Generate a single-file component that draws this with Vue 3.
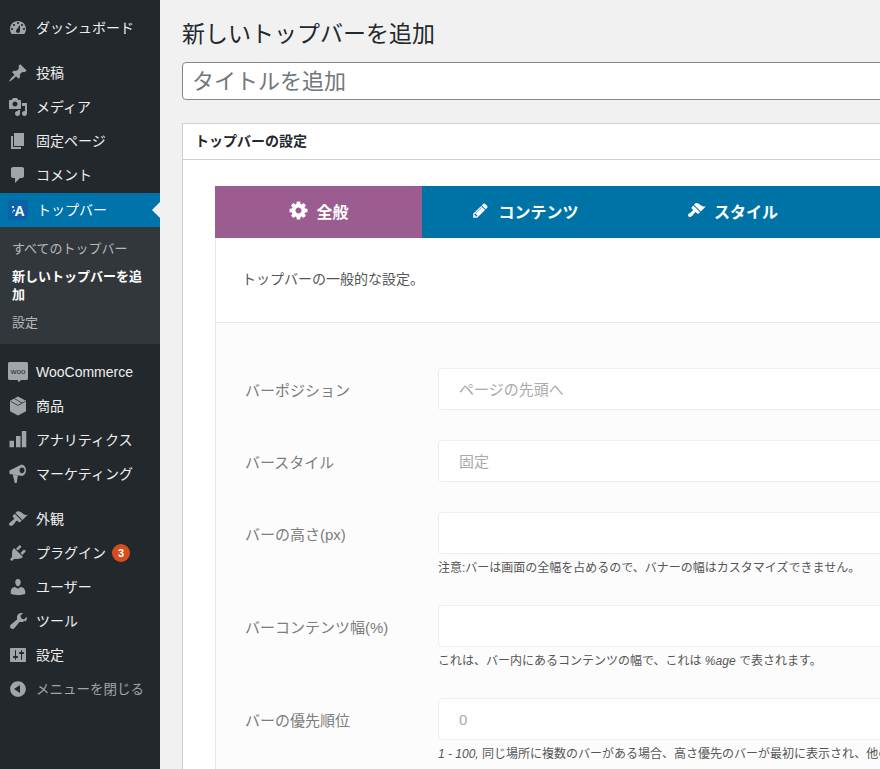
<script setup>
const dash = {
  dashboard: 'M3.76 16h12.48c1.1-1.37 1.76-3.11 1.76-5 0-4.42-3.58-8-8-8s-8 3.58-8 8c0 1.89.66 3.63 1.76 5zM10 4c.55 0 1 .45 1 1s-.45 1-1 1-1-.45-1-1 .45-1 1-1zM6 6c.55 0 1 .45 1 1s-.45 1-1 1-1-.45-1-1 .45-1 1-1zm8 0c.55 0 1 .45 1 1s-.45 1-1 1-1-.45-1-1 .45-1 1-1zm-5.37 5.55L12 7v6c0 1.1-.9 2-2 2s-2-.9-2-2c0-.57.24-1.08.63-1.45zM4 10c.55 0 1 .45 1 1s-.45 1-1 1-1-.45-1-1 .45-1 1-1zm12 0c.55 0 1 .45 1 1s-.45 1-1 1-1-.45-1-1 .45-1 1-1z',
  post: 'M10.44 3.02l1.82-1.82 6.36 6.35-1.83 1.82c-1.05-.68-2.48-.57-3.41.36l-.75.75c-.92.93-1.04 2.35-.35 3.41l-1.83 1.82-2.41-2.41-2.8 2.79c-.42.42-3.38 2.71-3.8 2.29s1.86-3.39 2.28-3.81l2.79-2.79L4.1 9.36l1.83-1.82c1.05.69 2.48.57 3.4-.36l.75-.75c.93-.92 1.05-2.35.36-3.41z',
  media: 'M13 11V4c0-.55-.45-1-1-1h-1.67L9 1H5L3.67 3H2c-.55 0-1 .45-1 1v7c0 .55.45 1 1 1h10c.55 0 1-.45 1-1zM7 4.5c1.38 0 2.5 1.12 2.5 2.5S8.38 9.5 7 9.5 4.5 8.38 4.5 7 5.62 4.5 7 4.5zM14 6h5v10.5c0 1.38-1.12 2.5-2.5 2.5S14 17.88 14 16.5s1.12-2.5 2.5-2.5c.17 0 .34.02.5.05V9h-3V6zm-4 8.05V13h2v3.5c0 1.38-1.12 2.5-2.5 2.5S7 17.88 7 16.5 8.12 14 9.5 14c.17 0 .34.02.5.05z',
  page: 'M6 15V2h10v13H6zm-1 1h8v2H3V5h2v11z',
  comment: 'M5 2h9c1.1 0 2 .9 2 2v7c0 1.1-.9 2-2 2h-2l-5 5v-5H5c-1.1 0-2-.9-2-2V4c0-1.1.9-2 2-2z',
  box: 'M10 .5l8 4.3v10.4l-8 4.3-8-4.3V4.8zM2.6 5.1l7.4 4 7.4-4v.7l-7.4 4-7.4-4zM6 2.8l7.6 4.1.6-.3-7.6-4.1z',
  bars: 'M1.5 10.7H6v6.6H1.5zM8 6h4.5v11.3H8zM13.8 1h4.5v16.3h-4.5z',
  megaphone: 'M1.5 6.5L12.5.9c3.2-1 5.5 2 5.5 5.3s-2.3 6.3-5.5 5.6L1.5 10zM14 3.4c-1.5 0-2.5 1.3-2.5 2.9s1 2.9 2.5 2.9 2.5-1.3 2.5-2.9-1-2.9-2.5-2.9zM4.8 10.7l5.2.9-.4 1.6-.9 5.8H6.8z',
  brush: 'M14.48 11.06L7.41 3.99l1.5-1.5c.5-.56 2.3-.47 3.51.32 1.21.8 1.43 1.28 2.91 2.1 1.18.64 2.45 1.26 4.45.85zm-.71.71L6.7 4.7 4.93 6.47c-.39.39-.39 1.02 0 1.41l1.06 1.06c.39.39.39 1.03 0 1.42-.6.6-1.43 1.11-2.21 1.69-.35.26-.7.53-1.01.84C1.43 13.23.5 15 1.62 16.38c1.08 1.08 2.85.2 4.18-1.15.26-.31.53-.66.8-1.01.57-.78 1.08-1.61 1.68-2.21.39-.39 1.03-.39 1.42 0l1.06 1.06c.39.39 1.02.39 1.41 0z',
  plugin: 'M13.11 4.36L9.87 7.6 8 5.73l3.24-3.24c.35-.34 1.05-.2 1.56.32.52.51.66 1.21.31 1.55zm-8 1.77l.91-1.12 9.01 9.01-1.19.84c-.71.71-2.63 1.16-3.82 1.16H6.14L4.9 17.26c-.59.59-1.54.59-2.12 0-.59-.58-.59-1.53 0-2.12l1.24-1.24v-3.88c0-1.13.4-3.18 1.09-3.89zm7.26 3.97l3.24-3.24c.34-.35 1.04-.21 1.55.31.52.51.66 1.21.31 1.55l-3.24 3.25z',
  user: 'M10 9.25c-2.27 0-2.73-3.44-2.73-3.44C7 4.02 7.82 2 9.97 2c2.16 0 2.98 2.02 2.71 3.81 0 0-.41 3.44-2.68 3.44zm0 2.57L12.72 10c2.39 0 4.52 2.33 4.52 4.53v2.49s-3.65 1.13-7.24 1.13c-3.65 0-7.24-1.13-7.24-1.13v-2.49c0-2.25 1.94-4.48 4.15-4.48z',
  tool: 'M16.68 9.77c-1.34 1.34-3.3 1.67-4.95.99l-5.41 6.52c-.99.99-2.59.99-3.57 0-.99-.98-.99-2.58 0-3.57l6.52-5.42c-.68-1.65-.35-3.61.99-4.95 1.28-1.28 3.12-1.64 4.73-1.07l-2.6 2.6.95 2.66 2.65.94 2.6-2.6c.57 1.61.21 3.45-1.07 4.73z',
  settings: 'M18 16V4c0-.55-.45-1-1-1H3c-.55 0-1 .45-1 1v12c0 .55.45 1 1 1h14c.55 0 1-.45 1-1zM8 11h1c.55 0 1 .45 1 1s-.45 1-1 1H8v1.5c0 .28-.22.5-.5.5s-.5-.22-.5-.5V13H6c-.55 0-1-.45-1-1s.45-1 1-1h1V5.5c0-.28.22-.5.5-.5s.5.22.5.5V11zm5-2h-1c-.55 0-1-.45-1-1s.45-1 1-1h1V5.5c0-.28.22-.5.5-.5s.5.22.5.5V7h1c.55 0 1 .45 1 1s-.45 1-1 1h-1v5.5c0 .28-.22.5-.5.5s-.5-.22-.5-.5V9z',
  collapse: 'M10 2.16c4.33 0 7.84 3.51 7.84 7.84s-3.51 7.84-7.84 7.84S2.16 14.33 2.16 10 5.67 2.16 10 2.16zm2 11.84V6l-6 4z'
}

const groupTop = [
  { label: 'ダッシュボード', icon: dash.dashboard }
]
const groupContent = [
  { label: '投稿', icon: dash.post },
  { label: 'メディア', icon: dash.media },
  { label: '固定ページ', icon: dash.page },
  { label: 'コメント', icon: dash.comment }
]
const submenu = [
  { label: 'すべてのトップバー' },
  { label: '新しいトップバーを追加', current: true },
  { label: '設定' }
]
const groupShop = [
  { label: '商品', icon: dash.box },
  { label: 'アナリティクス', icon: dash.bars },
  { label: 'マーケティング', icon: dash.megaphone }
]
const groupAdmin = [
  { label: '外観', icon: dash.brush },
  { label: 'プラグイン', icon: dash.plugin, badge: 3 },
  { label: 'ユーザー', icon: dash.user },
  { label: 'ツール', icon: dash.tool },
  { label: '設定', icon: dash.settings }
]

const tabs = [
  { label: '全般', active: true, size: 21, gap: 7, view: '0 0 1792 1792', d: 'M1152 896q0-106-75-181t-181-75-181 75-75 181 75 181 181 75 181-75 75-181zm512-109v222q0 12-8 23t-20 13l-185 28q-19 54-39 91 35 50 107 138 10 12 10 25t-9 23q-27 37-99 108t-94 71q-12 0-26-9l-138-108q-44 23-91 38-16 136-29 186-7 28-36 28h-222q-14 0-24.5-8.5t-11.5-21.5l-28-184q-49-16-90-37l-141 107q-10 9-25 9-14 0-25-11-126-114-165-168-7-10-7-23 0-12 8-23 15-21 51-66.5t54-70.5q-27-50-41-99l-183-27q-13-2-21-12.5t-8-23.5v-222q0-12 8-23t19-13l186-28q14-46 39-92-40-57-107-138-10-12-10-24 0-10 9-23 26-36 98.5-107.5t94.5-71.5q13 0 26 10l138 107q44-23 91-38 16-136 29-186 7-28 36-28h222q14 0 24.5 8.5t11.5 21.5l28 184q49 16 90 37l142-107q9-9 24-9 13 0 25 10 129 119 165 170 7 8 7 22 0 12-8 23-15 21-51 66.5t-54 70.5q26 50 41 98l183 28q13 2 21 12.5t8 23.5z' },
  { label: 'コンテンツ', size: 17, gap: 9, view: '0 0 1792 1792', d: 'M491 1536l91-91-235-235-91 91v107h128v128h107zm523-928q0-22-22-22-10 0-17 7l-542 542q-7 7-7 17 0 22 22 22 10 0 17-7l542-542q7-7 7-17zm-54-192l416 416-832 832h-416v-416zm683 96q0 53-37 90l-166 166-416-416 166-165q36-38 90-38 53 0 91 38l235 234q37 39 37 91z' },
  { label: 'スタイル', size: 19, gap: 8, view: '0 0 20 20', d: dash.brush }
]

const fields = [
  { label: 'バーポジション', value: 'ページの先頭へ' },
  { label: 'バースタイル', value: '固定' },
  { label: 'バーの高さ(px)', value: '', help: '注意:バーは画面の全幅を占めるので、バナーの幅はカスタマイズできません。' },
  { label: 'バーコンテンツ幅(%)', value: '', help: 'これは、バー内にあるコンテンツの幅で、これは <em>%age</em> で表されます。' },
  { label: 'バーの優先順位', value: '0', help: '<em>1 - 100,</em> 同じ場所に複数のバーがある場合、高さ優先のバーが最初に表示され、他のバーはその下に表示されます。' }
]
</script>

<template>
  <div class="page">
    <aside class="sidebar">
      <ul class="menu">
        <li v-for="item of groupTop" :key="item.label" class="menu-item">
          <svg class="menu-icon" viewBox="0 0 20 20"><path :d="item.icon" fill-rule="evenodd" /></svg>
          <span class="menu-text">{{ item.label }}</span>
        </li>
      </ul>

      <ul class="menu">
        <li v-for="item of groupContent" :key="item.label" class="menu-item">
          <svg class="menu-icon" viewBox="0 0 20 20"><path :d="item.icon" fill-rule="evenodd" /></svg>
          <span class="menu-text">{{ item.label }}</span>
        </li>
        <li class="menu-item active">
          <svg class="menu-icon" viewBox="0 0 20 20">
            <rect width="20" height="20" rx="3" fill="#0a62ab" />
            <text x="11.5" y="15.5" text-anchor="middle" class="logo-letter">A</text>
            <circle cx="5" cy="7" r="1.1" fill="#fff" />
            <circle cx="6" cy="10.5" r=".9" fill="#fff" />
            <circle cx="4.5" cy="12" r=".6" fill="#fff" />
          </svg>
          <span class="menu-text active-label">トップバー</span>
        </li>
        <li class="submenu">
          <a v-for="sub of submenu" :key="sub.label" class="sub-item" :class="{ current: sub.current }">{{ sub.label }}</a>
        </li>
      </ul>

      <ul class="menu">
        <li class="menu-item">
          <svg class="menu-icon" viewBox="0 0 20 20">
            <path d="M1.5 0h17c.8 0 1.5.7 1.5 1.5v15c0 .8-.7 1.5-1.5 1.5H13l-2.500 2.500-.8-2.500H1.500C.7 18 0 17.300 0 16.500v-15C0 .7.7 0 1.500 0z" />
            <text x="10" y="11.5" text-anchor="middle" class="woo-letters">woo</text>
          </svg>
          <span>WooCommerce</span>
        </li>
        <li v-for="item of groupShop" :key="item.label" class="menu-item">
          <svg class="menu-icon" viewBox="0 0 20 20"><path :d="item.icon" fill-rule="evenodd" /></svg>
          <span class="menu-text">{{ item.label }}</span>
        </li>
      </ul>

      <ul class="menu">
        <li v-for="item of groupAdmin" :key="item.label" class="menu-item">
          <svg class="menu-icon" viewBox="0 0 20 20"><path :d="item.icon" fill-rule="evenodd" /></svg>
          <span class="menu-text">{{ item.label }}</span>
          <b v-if="item.badge" class="badge">{{ item.badge }}</b>
        </li>
        <li class="menu-item collapse">
          <svg class="menu-icon" viewBox="0 0 20 20"><path :d="dash.collapse" fill-rule="evenodd" /></svg>
          <span class="menu-text">メニューを閉じる</span>
        </li>
      </ul>
    </aside>

    <main class="main">
      <h1 class="title">新しいトップバーを追加</h1>
      <div class="title-input">タイトルを追加</div>

      <section class="card">
        <h2 class="card-title">トップバーの設定</h2>
        <div class="card-body">
          <div class="tabs">
            <div v-for="tab of tabs" :key="tab.label" class="tab" :class="{ on: tab.active }" :style="{ gap: tab.gap + 'px' }">
              <svg :width="tab.size" :height="tab.size" :viewBox="tab.view" fill="#fff"><path :d="tab.d" /></svg>
              <span>{{ tab.label }}</span>
            </div>
          </div>
          <div class="panel">
            <p class="desc">トップバーの一般的な設定。</p>
            <div class="form">
              <div v-for="field of fields" :key="field.label" class="row">
                <label class="row-label">{{ field.label }}</label>
                <div class="row-control">
                  <div class="field">{{ field.value }}</div>
                  <p v-if="field.help" class="help" v-html="field.help"></p>
                </div>
              </div>
            </div>
          </div>
        </div>
      </section>
    </main>
  </div>
</template>

<style scoped>
.page {
  display: flex;
  width: 100%;
  height: 769px;
  overflow: hidden;
  background: #f1f1f1;
  font-family: "Liberation Sans", "Noto Sans CJK JP", sans-serif;
}
.sidebar {
  flex: 0 0 160px;
  height: 100%;
  background: #23282d;
  padding-top: 11px;
  box-sizing: border-box;
}
.menu {
  list-style: none;
  margin: 0 0 11px;
  padding: 0;
}
.menu-item {
  position: relative;
  display: flex;
  align-items: center;
  height: 34px;
  font-size: 14px;
  color: #eee;
}
.menu-icon {
  flex: none;
  width: 20px;
  height: 20px;
  margin: 0 8px;
  fill: #a0a5aa;
}
.menu-text {
  margin-top: -2px;
}
.active {
  margin-top: 1px;
  background: #0073aa;
  color: #fff;
}
.active::after {
  content: "";
  position: absolute;
  right: 0;
  top: 9px;
  border: 8px solid transparent;
  border-right-color: #f1f1f1;
  border-left-width: 0;
}
.active-label {
  margin-left: 1px;
}
.logo-letter {
  font: 700 14px "Liberation Sans", sans-serif;
  fill: #fff;
}
.woo-letters {
  font: 400 8px "Liberation Sans", sans-serif;
  fill: #23282d;
}
.submenu {
  background: #32373c;
  padding: 8px 0 7px;
}
.sub-item {
  display: block;
  padding: 5px 12px;
  font-size: 13px;
  line-height: 18px;
  color: #b4b9be;
}
.sub-item.current {
  color: #fff;
  font-weight: 700;
}
.badge {
  margin-left: 6px;
  width: 18px;
  height: 18px;
  border-radius: 50%;
  background: #d54e21;
  color: #fff;
  font-size: 11px;
  line-height: 18px;
  text-align: center;
}
.collapse {
  color: #a0a5aa;
  font-size: 13.5px;
}
.main {
  flex: 0 0 1100px;
  padding: 0 0 0 22px;
  box-sizing: border-box;
}
.title {
  margin: 0;
  padding-top: 19px;
  height: 62px;
  box-sizing: border-box;
  font-size: 23px;
  font-weight: 400;
  line-height: 31px;
  color: #23282d;
}
.title-input {
  height: 38px;
  box-sizing: border-box;
  padding-left: 9px;
  background: #fff;
  border: 1px solid #7e8993;
  border-radius: 4px;
  font-size: 22px;
  line-height: 38px;
  color: #72777c;
}
.card {
  margin-top: 23px;
  background: #fff;
  border: 1px solid #ccd0d4;
}
.card-title {
  margin: 0;
  height: 36px;
  box-sizing: border-box;
  padding-left: 12px;
  border-bottom: 1px solid #ccd0d4;
  font-size: 14px;
  font-weight: 700;
  line-height: 35px;
  color: #23282d;
}
.card-body {
  padding: 26px 32px;
}
.tabs {
  display: flex;
  height: 52px;
  background: #0073a6;
}
.tab {
  display: flex;
  flex: 0 0 207px;
  align-items: center;
  justify-content: center;
  padding-bottom: 3px;
  box-sizing: border-box;
  font-size: 16px;
  font-weight: 700;
  color: #fff;
}
.tab.on {
  background: #9b5c8f;
}
.panel {
  border-left: 1px solid #e8e8e8;
}
.desc {
  margin: 0;
  height: 85px;
  box-sizing: border-box;
  padding: 29px 0 0 26px;
  border-bottom: 1px solid #e8e8e8;
  font-size: 14px;
  line-height: 24px;
  color: #555;
}
.form {
  background: #fcfcfc;
  padding: 45px 0 40px;
}
.row {
  display: flex;
  margin-bottom: 30px;
}
.row-label {
  flex: 0 0 193px;
  height: 42px;
  margin-left: 29px;
  font-size: 15px;
  line-height: 46px;
  color: #7d7d7d;
}
.row-control {
  flex: 1;
}
.field {
  height: 42px;
  box-sizing: border-box;
  padding-left: 20px;
  background: #fff;
  border: 1px solid #eee;
  border-radius: 4px;
  font-size: 15px;
  line-height: 41px;
  color: #aaa;
}
.help {
  margin: 4px 0 -3px;
  font-size: 12px;
  line-height: 20px;
  color: #555;
}
</style>

<style>
html,
body {
  margin: 0;
  overflow: hidden;
}
</style>
